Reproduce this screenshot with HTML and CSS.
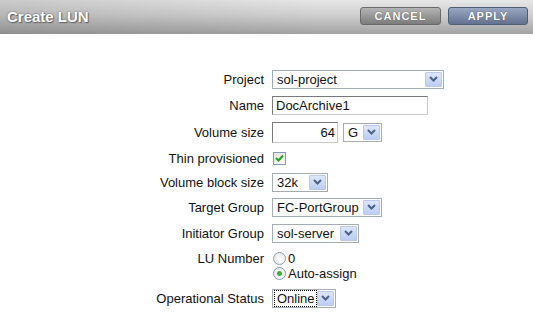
FILE: index.html
```html
<!DOCTYPE html>
<html>
<head>
<meta charset="utf-8">
<title>Create LUN</title>
<link rel="stylesheet" href="styles.css">
</head>
<body>
<div class="header">
  <h1 class="title">Create LUN</h1>
  <div class="actions">
    <button class="btn btn-cancel">CANCEL</button>
    <button class="btn btn-apply">APPLY</button>
  </div>
</div>
<div class="form">
  <div class="lbl">Project</div>
  <div class="ctl">
    <div class="select w-project"><span class="val">sol-project</span><span class="arrow"><svg width="9" height="6" viewBox="0 0 9 6"><path d="M1 1 L4.5 4.5 L8 1" fill="none" stroke="#4d6185" stroke-width="2"/></svg></span></div>
  </div>

  <div class="lbl">Name</div>
  <div class="ctl"><div class="input w-name">DocArchive1</div></div>

  <div class="lbl">Volume size</div>
  <div class="ctl">
    <div class="input w-size num">64</div>
    <div class="select w-unit"><span class="val">G</span><span class="arrow"><svg width="9" height="6" viewBox="0 0 9 6"><path d="M1 1 L4.5 4.5 L8 1" fill="none" stroke="#4d6185" stroke-width="2"/></svg></span></div>
  </div>

  <div class="lbl">Thin provisioned</div>
  <div class="ctl"><span class="check"><svg width="9" height="8" viewBox="0 0 9 8"><path d="M1 4 L3.5 6.5 L8 1.5" fill="none" stroke="#21a121" stroke-width="2"/></svg></span></div>

  <div class="lbl">Volume block size</div>
  <div class="ctl">
    <div class="select w-block"><span class="val">32k</span><span class="arrow"><svg width="9" height="6" viewBox="0 0 9 6"><path d="M1 1 L4.5 4.5 L8 1" fill="none" stroke="#4d6185" stroke-width="2"/></svg></span></div>
  </div>

  <div class="lbl">Target Group</div>
  <div class="ctl">
    <div class="select w-target"><span class="val">FC-PortGroup</span><span class="arrow"><svg width="9" height="6" viewBox="0 0 9 6"><path d="M1 1 L4.5 4.5 L8 1" fill="none" stroke="#4d6185" stroke-width="2"/></svg></span></div>
  </div>

  <div class="lbl">Initiator Group</div>
  <div class="ctl">
    <div class="select w-init"><span class="val">sol-server</span><span class="arrow"><svg width="9" height="6" viewBox="0 0 9 6"><path d="M1 1 L4.5 4.5 L8 1" fill="none" stroke="#4d6185" stroke-width="2"/></svg></span></div>
  </div>

  <div class="lbl lbl-top">LU Number</div>
  <div class="ctl radios">
    <div class="radio-line"><span class="radio"></span><span>0</span></div>
    <div class="radio-line"><span class="radio on"></span><span>Auto-assign</span></div>
  </div>

  <div class="lbl">Operational Status</div>
  <div class="ctl">
    <div class="select w-status"><span class="val focus">Online</span><span class="arrow"><svg width="9" height="6" viewBox="0 0 9 6"><path d="M1 1 L4.5 4.5 L8 1" fill="none" stroke="#4d6185" stroke-width="2"/></svg></span></div>
  </div>
</div>
</body>
</html>
```
FILE: styles.css
```css
* { box-sizing: border-box; }
html, body { margin: 0; padding: 0; background: #fff; }
body {
  width: 533px;
  height: 319px;
  overflow: hidden;
  font-family: "Liberation Sans", Arial, sans-serif;
  font-size: 13px;
  color: #111;
}
.header {
  height: 34px;
  display: flex;
  align-items: center;
  justify-content: space-between;
  padding: 0 5px 0 7px;
  background:
    linear-gradient(to right, rgba(0,0,0,0.12), rgba(0,0,0,0) 60%),
    linear-gradient(to bottom, #e6e6e6 0%, #cfcfcf 45%, #a2a2a2 100%);
}
.title {
  margin: 0;
  font-size: 15px;
  font-weight: bold;
  color: #fff;
  text-shadow: 0 0 2px #555, 1px 1px 1px #666;
  padding-bottom: 1px;
}
.actions { display: flex; gap: 7px; padding-bottom: 3px; }
.btn {
  height: 18px;
  width: 81px;
  border-radius: 3px;
  font-family: "Liberation Sans", Arial, sans-serif;
  font-size: 11px;
  font-weight: bold;
  letter-spacing: 1px;
  color: #fff;
  text-shadow: 0 0 1px #333;
  padding: 0;
  display: flex;
  align-items: center;
  justify-content: center;
}
.btn-cancel {
  border: 1px solid #6a6a6a;
  background: linear-gradient(to bottom, #b4b4b4, #7c7c7c);
}
.btn-apply {
  width: 80px;
  border: 1px solid #4f5d78;
  background: linear-gradient(to bottom, #9aa7c2, #63718f);
}
.form {
  display: grid;
  grid-template-columns: 264px auto;
  grid-template-rows: 26px 26px 28px 24px 24px 26px 26px 40px 24px;
  column-gap: 8px;
  padding-top: 32px;
}
.lbl {
  text-align: right;
  align-self: center;
  line-height: 15px;
}
.lbl-top { align-self: start; padding-top: 5px; }
.ctl {
  display: flex;
  align-items: center;
  gap: 5px;
}
.select {
  height: 19px;
  border: 1px solid #a5acb2;
  background: #fff;
  display: flex;
  align-items: center;
  justify-content: space-between;
  padding: 1px;
}
.select .val { padding-left: 3px; line-height: 15px; white-space: nowrap; }
.select .val.focus {
  outline: 1px dotted #000;
  padding: 0 1px 0 2px;
  margin-left: 1px;
  height: 15px;
}
.arrow {
  width: 17px;
  height: 15px;
  border: 1px solid #b8c9ef;
  border-radius: 1px;
  background: linear-gradient(to bottom, #dde7fc, #bccdf4);
  display: flex;
  align-items: center;
  justify-content: center;
  flex: none;
}
.w-project { width: 172px; }
.w-unit { width: 39px; }
.w-block { width: 56px; }
.w-target { width: 110px; }
.w-init { width: 87px; }
.w-status { width: 64px; }
.input {
  height: 19px;
  border: 1px solid #7a7a7a;
  border-right-color: #c8c8c8;
  border-bottom-color: #c8c8c8;
  background: #fff;
  padding: 0 3px;
  line-height: 17px;
}
.w-name { width: 156px; }
.w-size { width: 66px; height: 21px; line-height: 19px; }
.num { text-align: right; padding-right: 2px; }
.check {
  width: 13px;
  height: 13px;
  margin-left: 1px;
  border: 1px solid #7f9db9;
  background: linear-gradient(135deg, #e2e2dd, #fbfbf9);
  display: flex;
  align-items: center;
  justify-content: center;
}
.radios {
  flex-direction: column;
  align-items: flex-start;
  gap: 0;
  padding-top: 5px;
  justify-content: flex-start;
}
.radio-line {
  display: flex;
  align-items: center;
  gap: 2px;
  line-height: 15px;
  height: 15px;
}
.radio {
  width: 13px;
  height: 13px;
  border-radius: 50%;
  border: 1px solid #8aa0b8;
  background: radial-gradient(circle at 60% 60%, #fff, #e0e0dc);
  margin-left: 1px;
  display: flex;
  align-items: center;
  justify-content: center;
}
.radio.on::after {
  content: "";
  width: 5px;
  height: 5px;
  border-radius: 50%;
  background: #3fae3f;
}
```
